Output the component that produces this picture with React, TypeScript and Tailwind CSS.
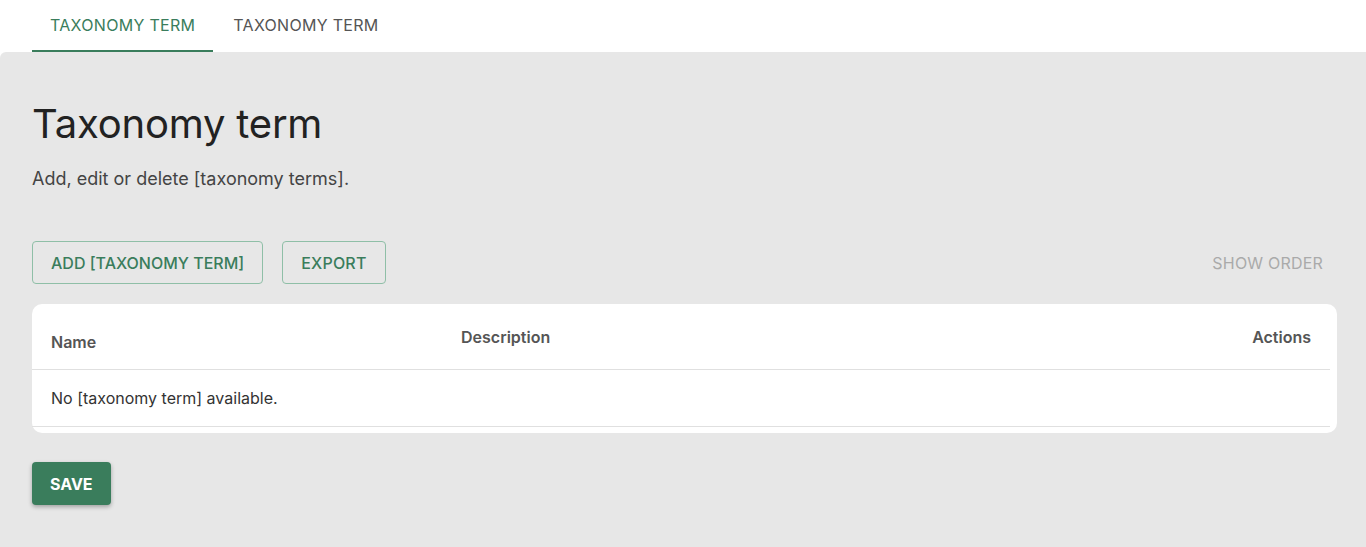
import React, { useState } from 'react';

const tabs = ['TAXONOMY TERM', 'TAXONOMY TERM'];

export default function App() {
  const [activeTab, setActiveTab] = useState(0);

  return (
    <div className="min-h-[547px] bg-white font-['Inter',sans-serif] text-[#222]">
      {/* Tabs */}
      <nav className="flex h-[52px] px-8 bg-white">
        {tabs.map((tab, i) => (
          <button
            key={i}
            onClick={() => setActiveTab(i)}
            className={
              i === activeTab
                ? 'h-full px-[18px] text-[16px] tracking-[0.3px] text-[#3a7d5c] border-b-2 border-[#3a7d5c]'
                : 'h-full px-[20px] text-[16px] tracking-[0.3px] text-[#555] border-b-2 border-transparent'
            }
          >
            {tab}
          </button>
        ))}
      </nav>

      {/* Content */}
      <main className="bg-[#e7e7e7] rounded-tl-[6px] pl-8 pr-[29px] pt-[48px] pb-[38px] min-h-[495px]">
        <h1 className="text-[40px] leading-[48px] text-[#222] tracking-[-0.2px]">Taxonomy term</h1>
        <p className="mt-[19px] text-[18px] leading-6 text-[#444]">Add, edit or delete [taxonomy terms].</p>

        <div className="flex items-center gap-[19px] mt-[50px]">
          <button className="h-[43px] px-[18px] border border-[#8fbfa7] rounded-[4px] text-[16px] font-medium text-[#3a7d5c]">
            ADD [TAXONOMY TERM]
          </button>
          <button className="h-[43px] px-[18px] border border-[#8fbfa7] rounded-[4px] text-[16px] font-medium tracking-[0.2px] text-[#3a7d5c]">
            EXPORT
          </button>
          <button className="ml-auto mr-[14px] text-[16px] tracking-[0.2px] text-[#aaa]">SHOW ORDER</button>
        </div>

        <div className="mt-5 bg-white rounded-[10px] pr-[7px] pb-[6px]">
          <div className="flex h-[66px] border-b border-[#e0e0e0] text-[16px] font-semibold text-[#555]">
            <div className="w-[429px] pl-[19px] pt-[26px]">Name</div>
            <div className="flex-1 pt-[21px]">Description</div>
            <div className="pr-[19px] pt-[21px]">Actions</div>
          </div>
          <div className="h-[57px] flex items-center pl-[19px] border-b border-[#e0e0e0] text-[16px] text-[#333]">
            No [taxonomy term] available.
          </div>
        </div>

        <button className="mt-[29px] h-[43px] px-[18px] rounded-[4px] bg-[#3a7d5c] text-white text-[16px] font-bold shadow-[0_2px_4px_rgba(0,0,0,0.3)]">
          SAVE
        </button>
      </main>
    </div>
  );
}
